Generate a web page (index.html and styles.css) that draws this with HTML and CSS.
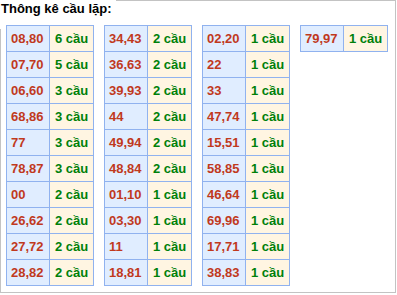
FILE: index.html
```html
<!DOCTYPE html>
<html>
<head>
<meta charset="utf-8">
<link rel="stylesheet" href="styles.css">
</head>
<body>
<div class="box">
  <div class="title">Thông kê cầu lặp:</div>
  <div class="tables">
    <div class="grid">
      <div class="n">08,80</div><div class="c">6 cầu</div>
      <div class="n">07,70</div><div class="c">5 cầu</div>
      <div class="n">06,60</div><div class="c">3 cầu</div>
      <div class="n">68,86</div><div class="c">3 cầu</div>
      <div class="n">77</div><div class="c">3 cầu</div>
      <div class="n">78,87</div><div class="c">3 cầu</div>
      <div class="n">00</div><div class="c">2 cầu</div>
      <div class="n">26,62</div><div class="c">2 cầu</div>
      <div class="n">27,72</div><div class="c">2 cầu</div>
      <div class="n">28,82</div><div class="c">2 cầu</div>
    </div>
    <div class="grid">
      <div class="n">34,43</div><div class="c">2 cầu</div>
      <div class="n">36,63</div><div class="c">2 cầu</div>
      <div class="n">39,93</div><div class="c">2 cầu</div>
      <div class="n">44</div><div class="c">2 cầu</div>
      <div class="n">49,94</div><div class="c">2 cầu</div>
      <div class="n">48,84</div><div class="c">2 cầu</div>
      <div class="n">01,10</div><div class="c">1 cầu</div>
      <div class="n">03,30</div><div class="c">1 cầu</div>
      <div class="n">11</div><div class="c">1 cầu</div>
      <div class="n">18,81</div><div class="c">1 cầu</div>
    </div>
    <div class="grid">
      <div class="n">02,20</div><div class="c">1 cầu</div>
      <div class="n">22</div><div class="c">1 cầu</div>
      <div class="n">33</div><div class="c">1 cầu</div>
      <div class="n">47,74</div><div class="c">1 cầu</div>
      <div class="n">15,51</div><div class="c">1 cầu</div>
      <div class="n">58,85</div><div class="c">1 cầu</div>
      <div class="n">46,64</div><div class="c">1 cầu</div>
      <div class="n">69,96</div><div class="c">1 cầu</div>
      <div class="n">17,71</div><div class="c">1 cầu</div>
      <div class="n">38,83</div><div class="c">1 cầu</div>
    </div>
    <div class="grid">
      <div class="n">79,97</div><div class="c">1 cầu</div>
    </div>
  </div>
</div>
</body>
</html>
```
FILE: styles.css
```css
html, body {
  margin: 0;
  padding: 0;
  background: #fff;
}
body {
  font-family: "Liberation Sans", Arial, sans-serif;
}
.box {
  width: 394px;
  height: 291px;
  border: 1px solid #c3c3c3;
}
.title {
  margin: -1px 0 0 -1px;
  width: max-content;
  padding: 1px 4px 0 1px;
  height: 28px;
  background: #fff;
  font-weight: bold;
  font-size: 13px;
  line-height: 15px;
  color: #000;
}
.tables {
  display: flex;
  align-items: flex-start;
  gap: 10px;
  margin-top: -4px;
  padding-left: 5px;
}
.grid {
  display: grid;
  grid-template-columns: 42px 43px;
  grid-auto-rows: 25px;
  gap: 1px;
  padding: 1px;
  background: #90b2ef;
}
.n, .c {
  display: flex;
  align-items: center;
  font-weight: bold;
  font-size: 13px;
}
.n {
  background: #e0edff;
  color: #c0391d;
  padding-left: 4px;
}
.c {
  background: #fff5e2;
  color: #00800a;
  padding-left: 5px;
}
```
